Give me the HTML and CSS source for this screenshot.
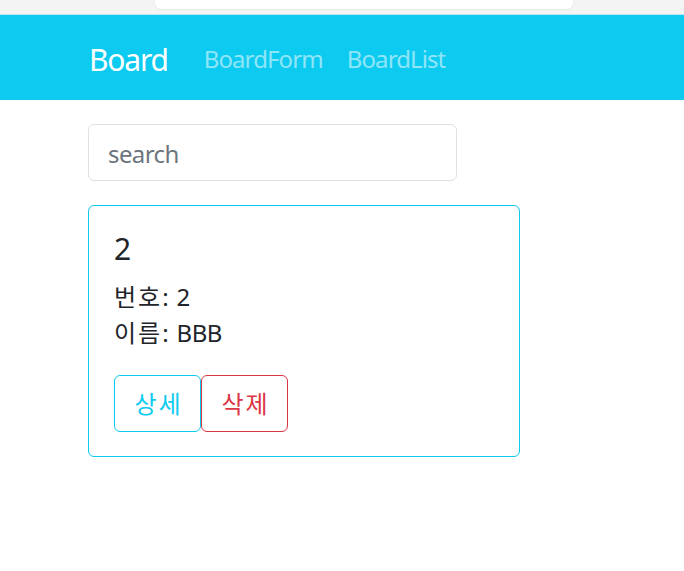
FILE: index.html
```html
<!DOCTYPE html>
<html lang="ko">
<head>
<meta charset="utf-8">
<title>Board</title>
<link rel="stylesheet" href="styles.css">
</head>
<body>
<div class="topstrip"><div class="topbox"></div></div>
<nav class="navbar">
  <div class="container nav-inner">
    <a class="brand" href="#">Board</a>
    <a class="nav-link" href="#">BoardForm</a>
    <a class="nav-link" href="#">BoardList</a>
  </div>
</nav>
<main class="container main">
  <input class="search" type="text" placeholder="search">
  <div class="card">
    <h5 class="card-title">2</h5>
    <div class="card-text">
      <div><span class="label">번호:</span> 2</div>
      <div><span class="label">이름:</span> BBB</div>
    </div>
    <div class="actions">
      <button class="btn btn-info">상세</button>
      <button class="btn btn-danger">삭제</button>
    </div>
  </div>
</main>
</body>
</html>
```
FILE: styles.css
```css
* { box-sizing: border-box; }
html, body { margin: 0; padding: 0; }
body {
  font-family: "Noto Sans", "Noto Sans CJK KR", sans-serif;
  font-size: 24px;
  line-height: 1.5;
  color: #212529;
  background: #fff;
}
.topstrip {
  height: 15px;
  background: #f4f4f4;
  border-bottom: 1px solid #bfe6ef;
  display: flex;
  padding-left: 155px;
}
.topbox {
  width: 418px;
  height: 9px;
  background: #fff;
  border-radius: 0 0 6px 6px;
  box-shadow: 0 1px 2px rgba(0,0,0,0.06);
}
.container { padding-left: 88px; }
.navbar {
  background: #0dcaf0;
  height: 85px;
  display: flex;
  align-items: center;
}
.nav-inner { display: flex; align-items: center; padding-top: 3px; }
.brand {
  font-size: 30px;
  line-height: 45px;
  color: #fff;
  text-decoration: none;
  margin-right: 24px;
  letter-spacing: -1.2px;
  padding-left: 1px;
}
.nav-link {
  padding: 0 12px;
  color: rgba(255,255,255,0.55);
  text-decoration: none;
  font-size: 24px;
  letter-spacing: -0.9px;
}
.main { padding-top: 24px; }
.search {
  display: block;
  width: 369px;
  height: 57px;
  border: 1px solid #dee2e6;
  border-radius: 6px;
  padding: 2px 19px 0;
  font: inherit;
  letter-spacing: -0.6px;
  color: #212529;
  margin: 0 0 24px 0;
}
.search::placeholder { color: #6c757d; }
.card {
  width: 432px;
  border: 1px solid #0dcaf0;
  border-radius: 6px;
  padding: 24px 24px 24px 25px;
}
.card-title {
  margin: 0 0 12px 0;
  font-size: 30px;
  font-weight: 400;
  line-height: 1.2;
  padding-top: 1px;
}
.card-text { margin-bottom: 24px; letter-spacing: -0.4px; }
.label { letter-spacing: 2px; }
.actions { display: flex; }
.btn {
  font: inherit;
  background: #fff;
  border: 1px solid;
  border-radius: 6px;
  height: 57px;
  width: 87px;
  padding: 0;
  font-size: 24px;
  letter-spacing: 2px;
  text-indent: 2px;
}
.btn-info { color: #0dcaf0; border-color: #0dcaf0; }
.btn-danger { color: #dc3545; border-color: #dc3545; }
```
